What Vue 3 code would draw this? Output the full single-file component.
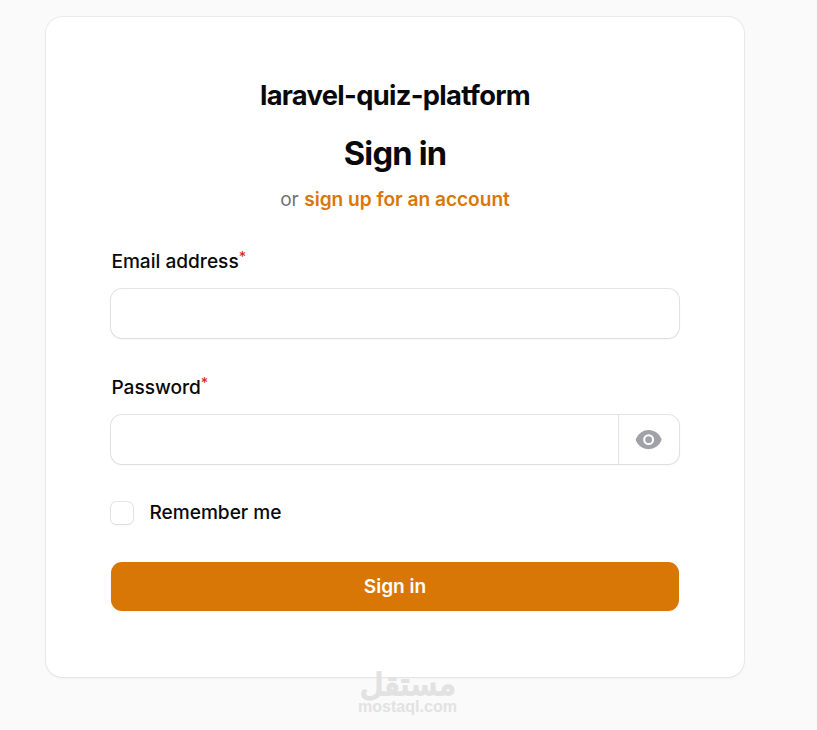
<script setup>
import { ref } from 'vue'

const email = ref('')
const password = ref('')
const remember = ref(false)
const reveal = ref(false)
</script>

<template>
  <div class="page">
    <main class="card">
      <header class="header">
        <div class="brand">laravel-quiz-platform</div>
        <h1 class="heading">Sign in</h1>
        <p class="sub">or <a class="link" href="#">sign up for an account</a></p>
      </header>
      <form class="form" @submit.prevent>
        <div class="field">
          <label class="label" for="email">Email address<sup class="req">*</sup></label>
          <div class="control">
            <input id="email" v-model="email" class="input" type="email" />
          </div>
        </div>
        <div class="field">
          <label class="label" for="password">Password<sup class="req">*</sup></label>
          <div class="control">
            <input id="password" v-model="password" class="input" :type="reveal ? 'text' : 'password'" />
            <button class="eye" type="button" @click="reveal = !reveal">
              <svg viewBox="0 0 20 20" width="27.3" height="27.3" fill="currentColor">
                <path d="M10 12.5a2.5 2.5 0 1 0 0-5 2.5 2.5 0 0 0 0 5Z" />
                <path
                  fill-rule="evenodd"
                  clip-rule="evenodd"
                  d="M.664 10.59a1.651 1.651 0 0 1 0-1.186A10.004 10.004 0 0 1 10 3c4.257 0 7.893 2.66 9.336 6.41.147.381.146.804 0 1.186A10.004 10.004 0 0 1 10 17c-4.257 0-7.893-2.66-9.336-6.41ZM14 10a4 4 0 1 1-8 0 4 4 0 0 1 8 0Z"
                />
              </svg>
            </button>
          </div>
        </div>
        <label class="remember">
          <input v-model="remember" class="check" type="checkbox" />
          <span>Remember me</span>
        </label>
        <button class="submit" type="submit">Sign in</button>
      </form>
    </main>
    <svg class="watermark" width="110" height="64" viewBox="0 0 110 64">
      <text class="wm-ar" x="55" y="38.5" text-anchor="middle" textLength="96" lengthAdjust="spacingAndGlyphs">مستقل</text>
      <text class="wm-en" x="5" y="56" textLength="99" lengthAdjust="spacingAndGlyphs">mostaql.com</text>
    </svg>
  </div>
</template>

<style>
body {
  margin: 0;
  background: #fafafa;
}
</style>

<style scoped>
.page {
  position: relative;
  box-sizing: border-box;
  height: 730px;
  padding: 17px 73px 0 46px;
  overflow: hidden;
  background: #fafafa;
  color: #09090b;
  font-family: Inter, 'Liberation Sans', sans-serif;
  font-size: 19.1px;
  line-height: 27px;
}
.card {
  box-sizing: border-box;
  height: 660px;
  padding: 65px;
  border-radius: 16.4px;
  background: #fff;
  box-shadow: 0 0 0 1px rgba(9, 9, 11, 0.06), 0 1px 3px rgba(0, 0, 0, 0.05);
}
.header {
  display: flex;
  flex-direction: column;
  align-items: center;
}
.brand {
  font-size: 27.3px;
  font-weight: 700;
  line-height: 27px;
  letter-spacing: -0.025em;
}
.heading {
  margin: 22px 0 0;
  font-size: 32.7px;
  font-weight: 700;
  line-height: 44px;
  letter-spacing: -0.025em;
}
.sub {
  margin: 11px 0 0;
  color: #71717a;
}
.link {
  color: #d97706;
  font-weight: 600;
  text-decoration: none;
}
.form {
  display: flex;
  flex-direction: column;
  margin-top: 32px;
}
.field {
  display: flex;
  flex-direction: column;
  margin-bottom: 33px;
}
.label {
  height: 33px;
  padding-left: 0.4px;
  font-weight: 500;
  line-height: 33px;
}
.req {
  position: relative;
  top: -0.45em;
  color: #dc2626;
  font-size: 14.3px;
  line-height: 0;
  vertical-align: baseline;
}
.control {
  display: flex;
  height: 49px;
  margin-top: 11px;
  border-radius: 10.9px;
  background: #fff;
  box-shadow: 0 0 0 1px rgba(9, 9, 11, 0.1), 0 1px 3px rgba(0, 0, 0, 0.06);
}
.input {
  flex: 1;
  min-width: 0;
  padding: 0 16px;
  border: 0;
  outline: 0;
  background: transparent;
  font: inherit;
}
.eye {
  display: flex;
  box-sizing: border-box;
  align-items: center;
  justify-content: center;
  width: 61px;
  padding: 0;
  border: 0;
  border-left: 1px solid #e4e4e7;
  background: transparent;
  color: #a1a1aa;
}
.remember {
  display: flex;
  align-items: center;
  gap: 16.4px;
  height: 32px;
  margin-top: -1px;
  font-weight: 500;
}
.check {
  appearance: none;
  width: 22px;
  height: 22px;
  margin: 2px 0 0;
  border-radius: 5.5px;
  background: #fff;
  box-shadow: 0 0 0 1px rgba(9, 9, 11, 0.1), 0 1px 3px rgba(0, 0, 0, 0.06);
}
.submit {
  height: 49px;
  margin-top: 34px;
  padding: 0;
  border: 0;
  border-radius: 10.9px;
  background: #d97706;
  color: #fff;
  font: inherit;
  font-weight: 600;
  box-shadow: 0 1px 2px rgba(0, 0, 0, 0.05);
}
.watermark {
  position: absolute;
  top: 656px;
  left: 353px;
  overflow: visible;
  fill: #e2e2e3;
}
.wm-ar {
  font-family: 'DejaVu Sans', sans-serif;
  font-size: 30px;
  font-weight: 400;
  stroke: #e2e2e3;
  stroke-width: 1.8;
  stroke-linejoin: round;
}
.wm-en {
  font-family: 'Liberation Sans', sans-serif;
  font-size: 16px;
  font-weight: 700;
}
</style>
